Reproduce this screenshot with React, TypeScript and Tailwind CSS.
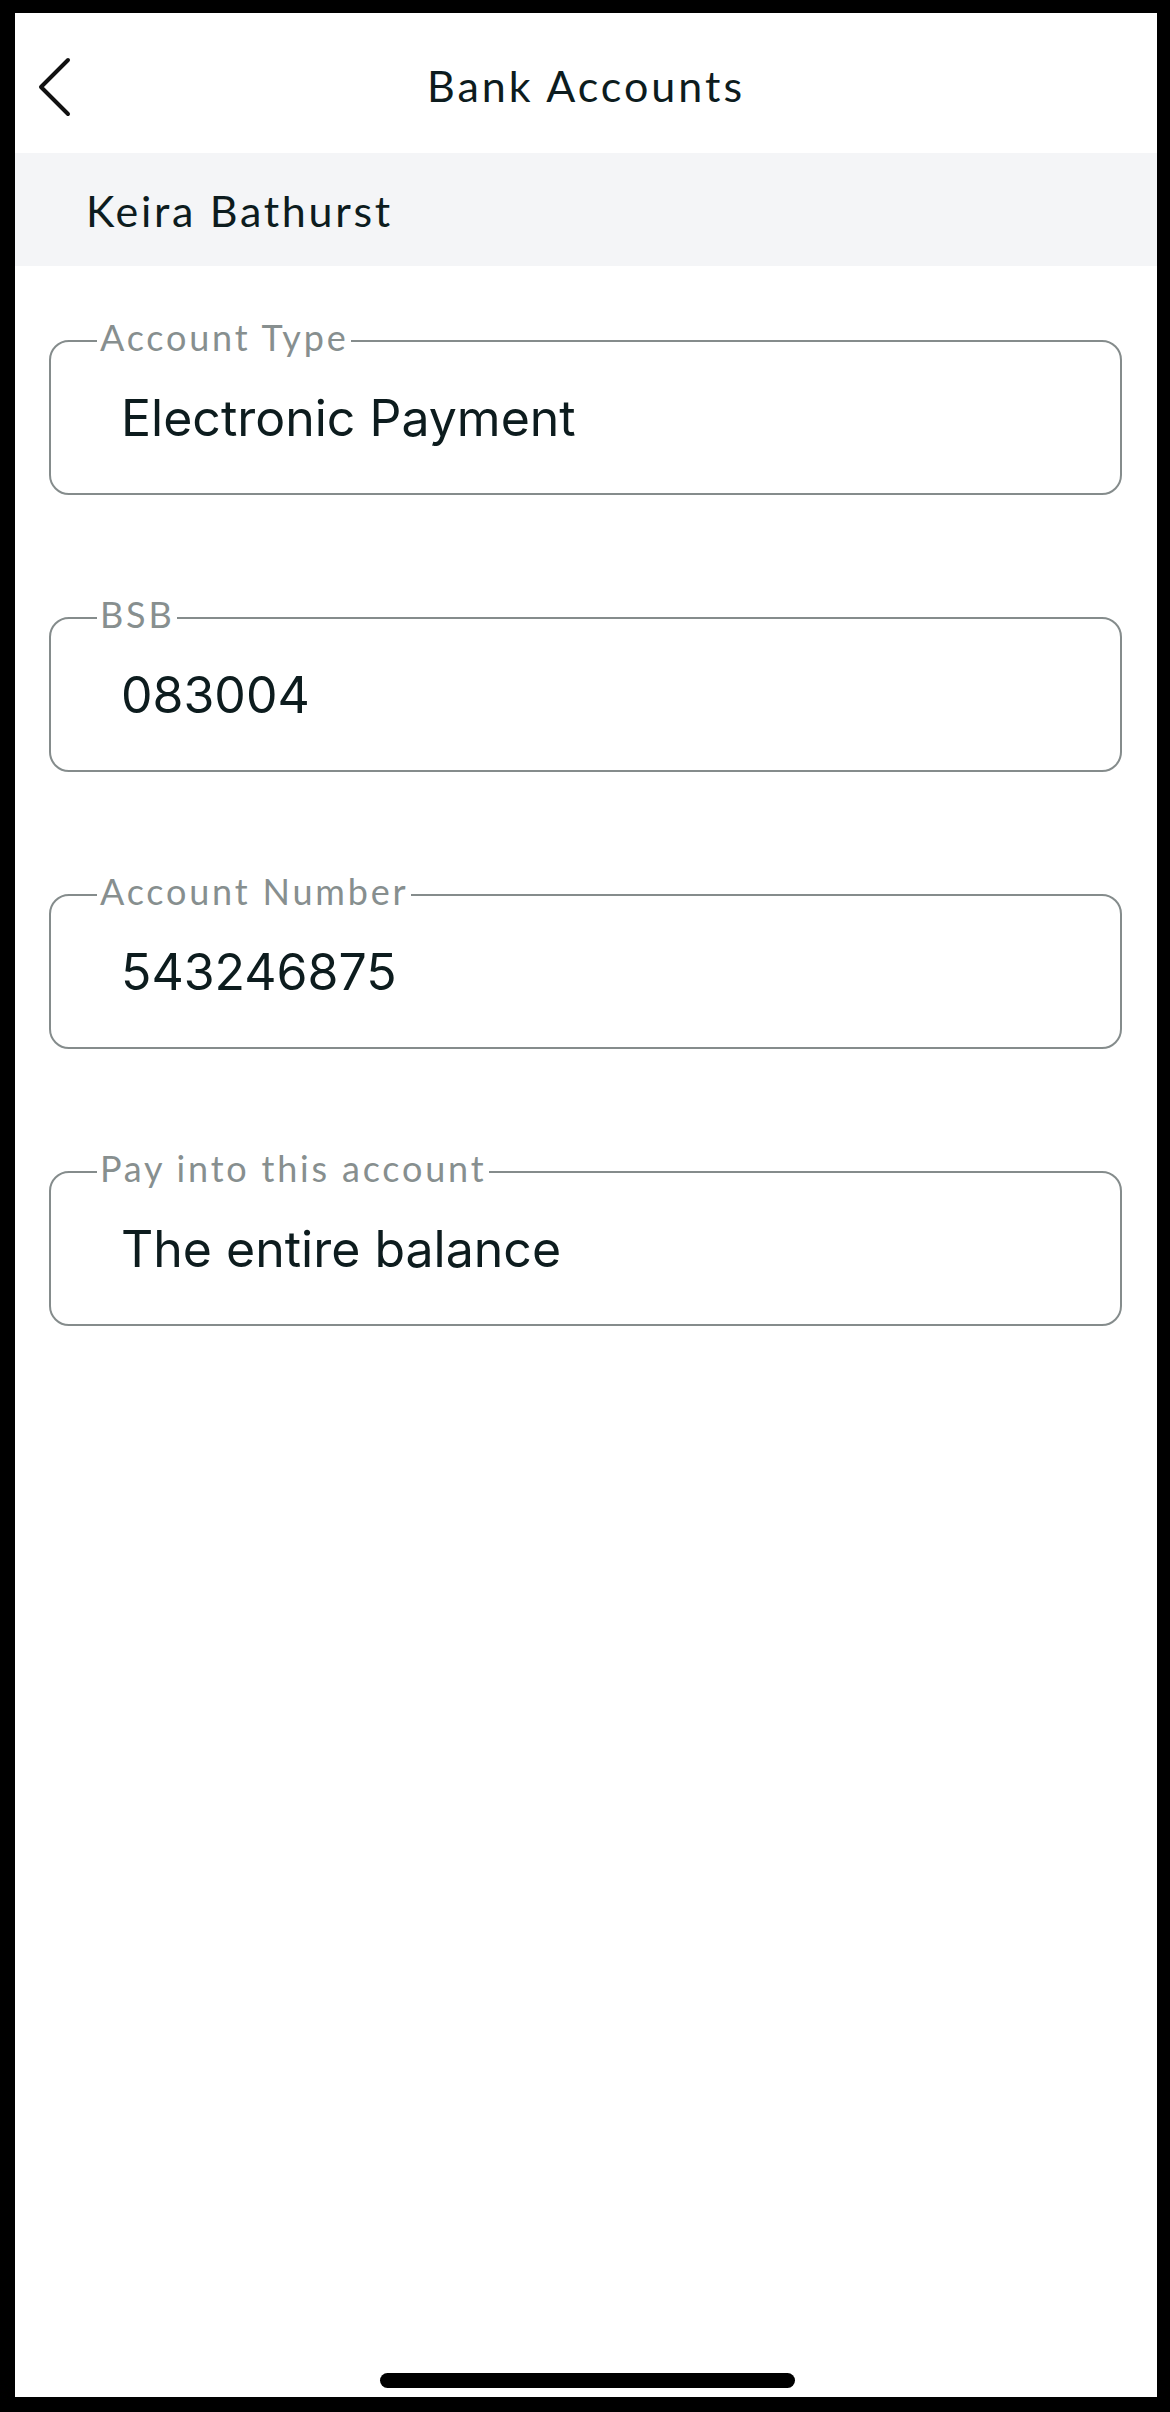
import React from "react";

const fields = [
  { label: "Account Type", value: "Electronic Payment" },
  { label: "BSB", value: "083004" },
  { label: "Account Number", value: "543246875" },
  { label: "Pay into this account", value: "The entire balance" },
];

function Field({ label, value }: { label: string; value: string }) {
  return (
    <div className="relative h-[155px] rounded-[20px] border-[2.5px] border-[#858c8c] flex items-center pl-[70px]">
      <span
        className="absolute left-[46px] top-[-25px] bg-white px-[3px] text-[36px] leading-[40px] text-[#878f8f] tracking-[2.8px]"
        style={{ fontFamily: "Lato, 'Open Sans', sans-serif" }}
      >
        {label}
      </span>
      <span
        className="text-[50px] leading-none text-[#0d1c1e]"
        style={{ fontFamily: "Inter, 'Noto Sans', sans-serif" }}
      >
        {value}
      </span>
    </div>
  );
}

export default function App() {
  return (
    <div className="w-[1170px] h-[2412px] bg-black pt-[13px] pl-[15px] pr-[13px] pb-[15px]">
      <div className="h-full bg-white flex flex-col" style={{ fontFamily: "Lato, 'Open Sans', sans-serif" }}>
        <header className="relative h-[140px] flex items-center justify-center">
          <svg
            className="absolute left-[21px] top-[44px]"
            width="36"
            height="60"
            viewBox="0 0 36 60"
            fill="none"
          >
            <path d="M32 3 L5 30 L32 57" stroke="#111" strokeWidth="4" strokeLinecap="round" strokeLinejoin="round" />
          </svg>
          <h1 className="text-[43px] leading-none text-[#0d1c1e] tracking-[3px] mt-[4px]">Bank Accounts</h1>
        </header>
        <div className="h-[113px] bg-[#f4f5f7] flex items-center pl-[71px]">
          <span className="text-[43px] leading-none text-[#0d1c1e] tracking-[2.7px] mt-[2px]">Keira Bathurst</span>
        </div>
        <div className="flex flex-col gap-[122px] pl-[34px] pr-[35px] pt-[74px]">
          {fields.map((f) => (
            <Field key={f.label} label={f.label} value={f.value} />
          ))}
        </div>
        <div className="mt-auto mb-[9px] flex justify-center">
          <div className="w-[415px] h-[15px] rounded-full bg-black ml-[2px]" />
        </div>
      </div>
    </div>
  );
}
